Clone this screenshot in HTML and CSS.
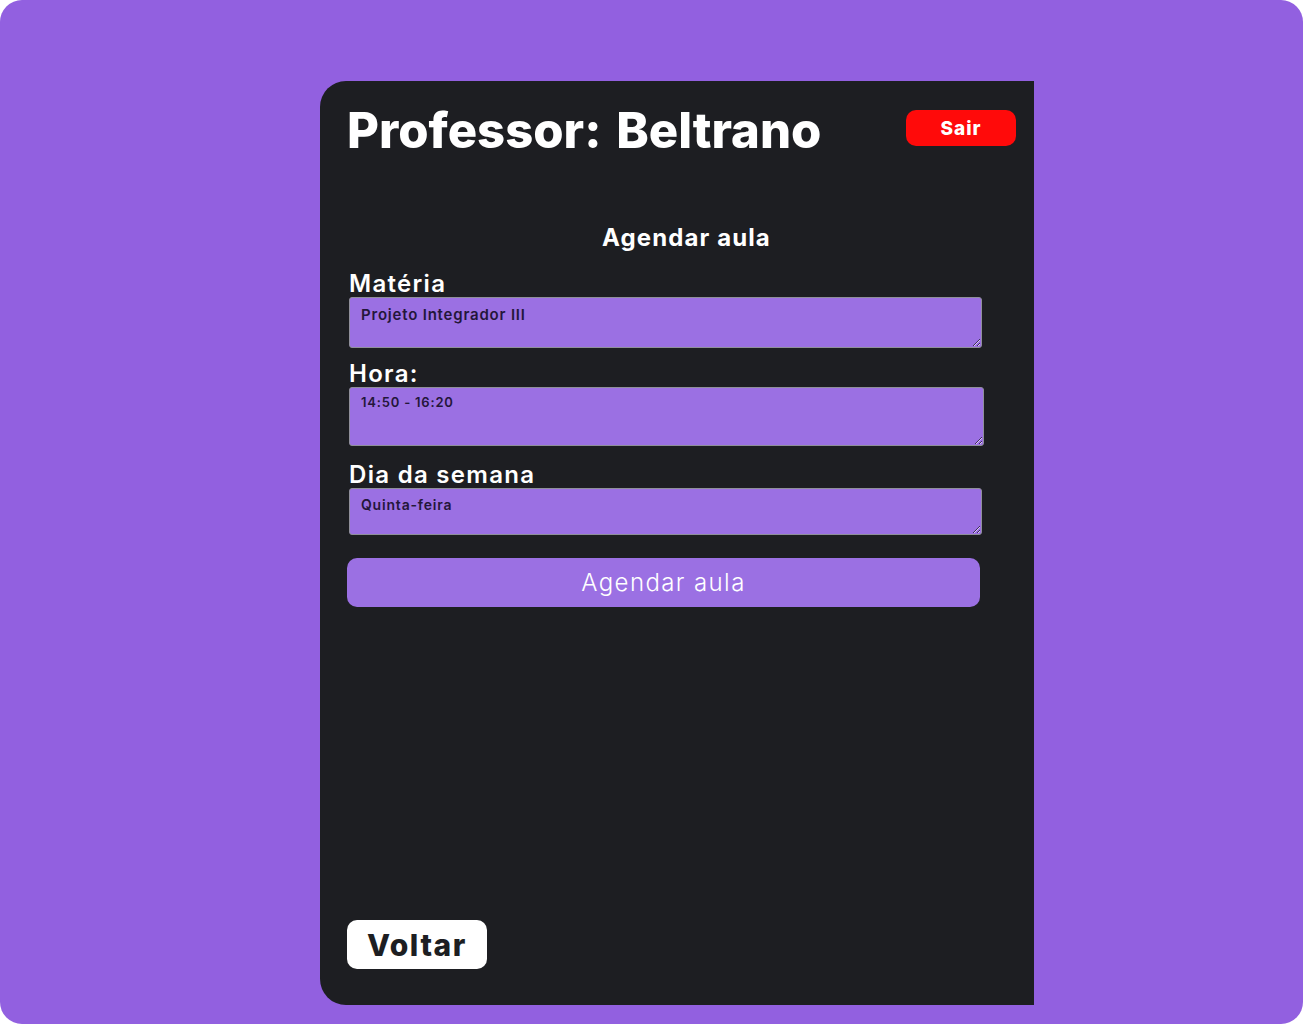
FILE: index.html
```html
<!DOCTYPE html>
<html lang="pt-BR">
<head>
<meta charset="utf-8">
<title>Agendar aula</title>
<link rel="stylesheet" href="styles.css">
</head>
<body>
<div class="frame">
  <main class="card">
    <header class="top">
      <h1 class="title"><span>Professor:</span> <span>Beltrano</span></h1>
      <button class="logout">Sair</button>
    </header>
    <section class="form">
      <h2 class="form-title">Agendar aula</h2>
      <label class="label l1">Matéria</label>
      <textarea class="field f1">Projeto Integrador III</textarea>
      <label class="label l2">Hora:</label>
      <textarea class="field f2">14:50 - 16:20</textarea>
      <label class="label l3">Dia da semana</label>
      <textarea class="field f3">Quinta-feira</textarea>
      <button class="submit">Agendar aula</button>
    </section>
    <footer class="bottom">
      <button class="back">Voltar</button>
    </footer>
  </main>
</div>
</body>
</html>
```

FILE: styles.css
```css
* { box-sizing: border-box; }
html, body { margin: 0; padding: 0; background: #ffffff; }
body { font-family: "Inter", "Noto Sans", sans-serif; }
.frame {
  width: 1303px;
  height: 1024px;
  background: #9260e0;
  border-radius: 22px;
  padding: 81px 0 0 320px;
}
.card {
  width: 714px;
  height: 924px;
  background: #1d1e22;
  border-radius: 26px 0 0 26px;
  padding: 0 18px 0 27px;
  display: flex;
  flex-direction: column;
}
.top {
  display: flex;
  justify-content: space-between;
  align-items: flex-start;
  height: 110px;
}
.title {
  margin: 20px 0 0 0;
  color: #ffffff;
  font-size: 49px;
  font-weight: 800;
  line-height: 60px;
  word-spacing: 4px;
}
.logout {
  margin-top: 29px;
  width: 110px;
  height: 36px;
  background: #ff0a0a;
  border: none;
  border-radius: 10px;
  color: #ffffff;
  font-family: inherit;
  font-size: 19px;
  font-weight: 800;
  letter-spacing: 1px;
}
.form {
  display: flex;
  flex-direction: column;
  padding-left: 2px;
  width: 637px;
}
.form-title {
  margin: 33px 0 0 0;
  text-align: center;
  color: #ffffff;
  font-size: 24px;
  font-weight: 700;
  line-height: 28px;
  letter-spacing: 1.1px;
  padding-left: 40px;
}
.label {
  color: #ffffff;
  font-size: 24px;
  font-weight: 600;
  line-height: 26px;
  letter-spacing: 1.3px;
}
.l1 { margin-top: 19px; }
.l2 { margin-top: 13px; }
.l3 { margin-top: 16px; }
.field {
  display: block;
  width: 633px;
  background: #9b70e3;
  border: 1px solid #8f8f9a;
  border-radius: 3px;
  color: #24163a;
  font-family: inherit;
  font-weight: 600;
  letter-spacing: 0.8px;
  padding: 7px 11px;
  resize: vertical;
  outline: none;
}
.f1 { height: 51px; font-size: 15px; }
.f2 { height: 59px; width: 635px; font-size: 13px; padding-top: 6px; }
.f3 { height: 47px; font-size: 14px; }
.submit {
  margin: 23px 0 0 -2px;
  width: 633px;
  height: 49px;
  background: #9b70e3;
  border: none;
  border-radius: 10px;
  color: #ffffff;
  font-family: inherit;
  font-size: 24px;
  font-weight: 300;
  letter-spacing: 1.4px;
}
.bottom {
  margin-top: auto;
  padding-bottom: 36px;
}
.back {
  width: 140px;
  height: 49px;
  background: #ffffff;
  border: none;
  border-radius: 10px;
  color: #1d1e22;
  font-family: inherit;
  font-size: 30px;
  font-weight: 800;
  letter-spacing: 1.6px;
}
```
